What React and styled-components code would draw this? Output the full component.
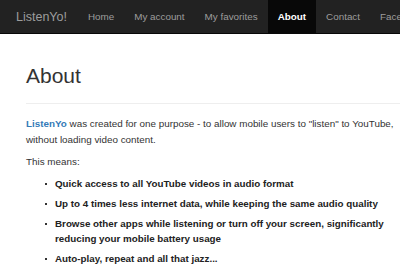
import styled, { createGlobalStyle } from 'styled-components';

const GlobalStyle = createGlobalStyle`
  body {
    margin: 0;
    background: #fff;
    font-family: "Liberation Sans", Arial, sans-serif;
    font-size: 10px;
    line-height: 16px;
    color: #333;
  }
`;

const Navbar = styled.nav`
  display: flex;
  align-items: stretch;
  height: 34px;
  background: #222;
  border-bottom: 1px solid #080808;
  box-sizing: border-box;
  overflow: hidden;
  white-space: nowrap;
`;

const Brand = styled.a`
  display: flex;
  align-items: center;
  padding: 0 11px 0 16px;
  font-size: 12.5px;
  color: #9d9d9d;
  text-decoration: none;
`;

const NavItem = styled.a`
  display: flex;
  align-items: center;
  padding: 0 10px;
  font-size: 9.85px;
  color: ${(p) => (p.active ? '#fff' : '#9d9d9d')};
  background: ${(p) => (p.active ? '#080808' : 'transparent')};
  font-weight: ${(p) => (p.active ? 'bold' : 'normal')};
  text-decoration: none;
`;

const Container = styled.main`
  padding: 0 0 0 26px;
  overflow: hidden;
`;

const PageHeader = styled.div`
  margin-top: 28px;
  padding-bottom: 13px;
  border-bottom: 1px solid #eee;
  margin-bottom: 12px;
`;

const Title = styled.h1`
  margin: 0;
  font-size: 21px;
  font-weight: normal;
  line-height: 28px;
  color: #333;
`;

const Paragraph = styled.p`
  margin: 0 0 6px;
  font-size: 9.85px;
`;

const Link = styled.a`
  color: #337ab7;
  font-weight: bold;
  text-decoration: none;
`;

const List = styled.ul`
  margin: 3px 0 0;
  padding: 0 14px 0 29px;
  list-style: none;
`;

const Item = styled.li`
  position: relative;
  margin-bottom: 5px;
  line-height: 15px;
  font-size: 9.8px;
  font-weight: bold;
  color: #222;

  &::before {
    content: '';
    position: absolute;
    left: -10px;
    top: 7px;
    width: 2px;
    height: 2px;
    background: #333;
  }
`;

const navLinks = ['Home', 'My account', 'My favorites', 'About', 'Contact', 'Facebook'];

const features = [
  'Quick access to all YouTube videos in audio format',
  'Up to 4 times less internet data, while keeping the same audio quality',
  'Browse other apps while listening or turn off your screen, significantly reducing your mobile battery usage',
  'Auto-play, repeat and all that jazz...',
];

const App = () => {
  return (
    <>
      <GlobalStyle />
      <Navbar>
        <Brand href="#">ListenYo!</Brand>
        {navLinks.map((label) => (
          <NavItem key={label} href="#" active={label === 'About'}>
            {label}
          </NavItem>
        ))}
      </Navbar>
      <Container>
        <PageHeader>
          <Title>About</Title>
        </PageHeader>
        <Paragraph>
          <Link href="#">ListenYo</Link> was created for one purpose - to allow mobile users to "listen" to
          YouTube, without loading video content.
        </Paragraph>
        <Paragraph>This means:</Paragraph>
        <List>
          {features.map((f) => (
            <Item key={f}>{f}</Item>
          ))}
        </List>
      </Container>
    </>
  );
};

export default App;
